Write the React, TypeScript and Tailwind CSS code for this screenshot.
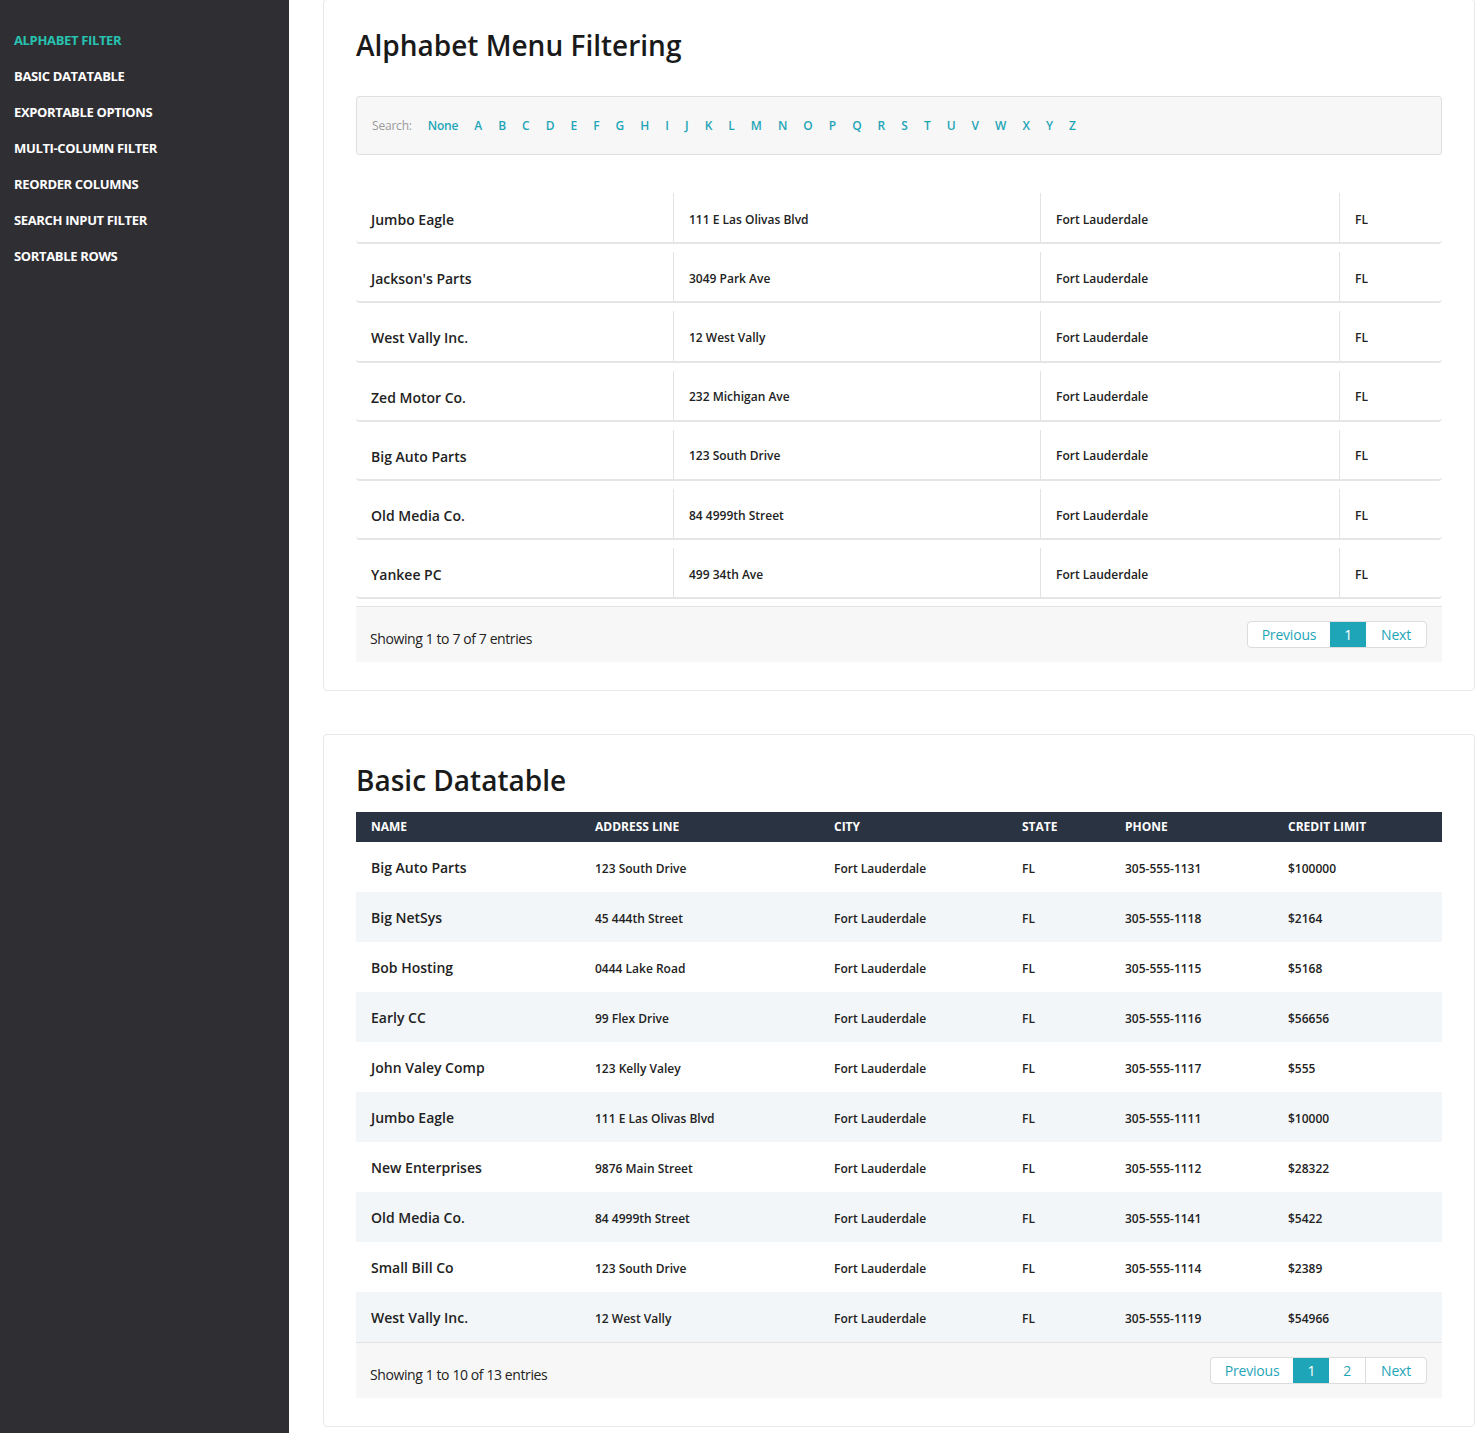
import React from "react";

const nav = [
  "ALPHABET FILTER",
  "BASIC DATATABLE",
  "EXPORTABLE OPTIONS",
  "MULTI-COLUMN FILTER",
  "REORDER COLUMNS",
  "SEARCH INPUT FILTER",
  "SORTABLE ROWS",
];

const letters = "ABCDEFGHIJKLMNOPQRSTUVWXYZ".split("");

const alphaRows = [
  ["Jumbo Eagle", "111 E Las Olivas Blvd"],
  ["Jackson's Parts", "3049 Park Ave"],
  ["West Vally Inc.", "12 West Vally"],
  ["Zed Motor Co.", "232 Michigan Ave"],
  ["Big Auto Parts", "123 South Drive"],
  ["Old Media Co.", "84 4999th Street"],
  ["Yankee PC", "499 34th Ave"],
];

const basicRows = [
  ["Big Auto Parts", "123 South Drive", "305-555-1131", "$100000"],
  ["Big NetSys", "45 444th Street", "305-555-1118", "$2164"],
  ["Bob Hosting", "0444 Lake Road", "305-555-1115", "$5168"],
  ["Early CC", "99 Flex Drive", "305-555-1116", "$56656"],
  ["John Valey Comp", "123 Kelly Valey", "305-555-1117", "$555"],
  ["Jumbo Eagle", "111 E Las Olivas Blvd", "305-555-1111", "$10000"],
  ["New Enterprises", "9876 Main Street", "305-555-1112", "$28322"],
  ["Old Media Co.", "84 4999th Street", "305-555-1141", "$5422"],
  ["Small Bill Co", "123 South Drive", "305-555-1114", "$2389"],
  ["West Vally Inc.", "12 West Vally", "305-555-1119", "$54966"],
];

function Pager({ pages }: { pages: number[] }) {
  return (
    <div className="flex h-[27px] rounded-[4px] border border-[#dcdcdc] bg-white text-[14px] text-[#1fa5b8] overflow-hidden tracking-[-0.2px]">
      <div className="flex items-center px-[14px]">Previous</div>
      {pages.map((p, i) => (
        <div
          key={p}
          className={
            i === 0
              ? "flex items-center px-[14px] bg-[#1fa5b8] text-white"
              : "flex items-center px-[14px] border-r border-[#dcdcdc]"
          }
        >
          {p}
        </div>
      ))}
      <div className="flex items-center px-[15px]">Next</div>
    </div>
  );
}

function Footer({ text, pages }: { text: string; pages: number[] }) {
  return (
    <div className="flex items-center justify-between h-[56px] bg-[#f7f7f7] border-t border-[#e3e3e3] pl-[14px] pr-[15px]">
      <div className="text-[14px] text-[#222] pt-[7px] tracking-[-0.4px]">{text}</div>
      <Pager pages={pages} />
    </div>
  );
}

export default function App() {
  return (
    <div
      className="flex min-h-[1433px] bg-white"
      style={{ fontFamily: '"Open Sans", "Noto Sans", sans-serif' }}
    >
      <aside className="w-[289px] shrink-0 bg-[#2f2e33] pt-[31px]">
        {nav.map((n, i) => (
          <div
            key={n}
            className={
              i === 0
                ? "h-[36px] pl-[14px] text-[13px] font-bold tracking-[-0.35px] text-[#27c2b0]"
                : "h-[36px] pl-[14px] text-[13px] font-bold tracking-[-0.35px] text-white"
            }
          >
            {n}
          </div>
        ))}
      </aside>

      <main className="flex-1 pl-[34px] pr-[7px] pb-[6px]">
        {/* Card 1 */}
        <section className="mt-[-1px] rounded-[4px] border border-[#e8e8e8] px-[32px] pt-[29px] pb-[28px]">
          <h1 className="text-[28px] leading-[32px] text-[#1a1a1a] font-semibold">Alphabet Menu Filtering</h1>
          <div className="mt-[35px] flex h-[59px] items-center gap-[16px] rounded-[3px] border border-[#e0e0e0] bg-[#f7f7f7] pl-[15px] text-[12px]">
            <span className="text-[#9a9a9a] tracking-[-0.2px]">Search:</span>
            <span className="font-semibold text-[#1fa5b8] tracking-[-0.2px]">None</span>
            {letters.map((l) => (
              <span key={l} className="font-semibold text-[#1fa5b8]">
                {l}
              </span>
            ))}
          </div>
          <div className="mt-[38px] flex flex-col gap-[8px]">
            {alphaRows.map((r) => (
              <div
                key={r[0]}
                className="grid h-[51.2px] grid-cols-[317px_367px_299px_1fr] rounded-[4px] border-b-2 border-[#e5e5e5] text-[#222]"
              >
                <div className="flex items-center pl-[15px] pt-[4px] text-[14px] font-semibold">{r[0]}</div>
                <div className="flex items-center border-l border-[#e3e3e3] pl-[15px] pt-[4px] text-[12px] font-semibold">{r[1]}</div>
                <div className="flex items-center border-l border-[#e3e3e3] pl-[15px] pt-[4px] text-[12px] font-semibold">Fort Lauderdale</div>
                <div className="flex items-center border-l border-[#e3e3e3] pl-[15px] pt-[4px] text-[12px] font-semibold">FL</div>
              </div>
            ))}
          </div>
          <div className="mt-[7px]">
            <Footer text="Showing 1 to 7 of 7 entries" pages={[1]} />
          </div>
        </section>

        {/* Card 2 */}
        <section className="mt-[43px] rounded-[4px] border border-[#e8e8e8] px-[32px] pt-[29px] pb-[28px]">
          <h1 className="text-[28px] leading-[32px] text-[#1a1a1a] font-semibold">Basic Datatable</h1>
          <div className="mt-[16px]">
            <div className="grid h-[30px] grid-cols-[224px_239px_188px_103px_163px_1fr] items-center bg-[#2a3342] text-[12px] font-bold text-white">
              <div className="pl-[15px]">NAME</div>
              <div className="pl-[15px]">ADDRESS LINE</div>
              <div className="pl-[15px]">CITY</div>
              <div className="pl-[15px]">STATE</div>
              <div className="pl-[15px]">PHONE</div>
              <div className="pl-[15px]">CREDIT LIMIT</div>
            </div>
            {basicRows.map((r, i) => (
              <div
                key={r[0]}
                className={
                  i % 2 === 1
                    ? "grid h-[50px] grid-cols-[224px_239px_188px_103px_163px_1fr] items-center bg-[#f3f6f9] pt-[4px] text-[12px] font-semibold text-[#222]"
                    : "grid h-[50px] grid-cols-[224px_239px_188px_103px_163px_1fr] items-center bg-white pt-[4px] text-[12px] font-semibold text-[#222]"
                }
              >
                <div className="pl-[15px] mt-[-4px] text-[14px]">{r[0]}</div>
                <div className="pl-[15px]">{r[1]}</div>
                <div className="pl-[15px]">Fort Lauderdale</div>
                <div className="pl-[15px]">FL</div>
                <div className="pl-[15px]">{r[2]}</div>
                <div className="pl-[15px]">{r[3]}</div>
              </div>
            ))}
            <Footer text="Showing 1 to 10 of 13 entries" pages={[1, 2]} />
          </div>
        </section>
      </main>
    </div>
  );
}
